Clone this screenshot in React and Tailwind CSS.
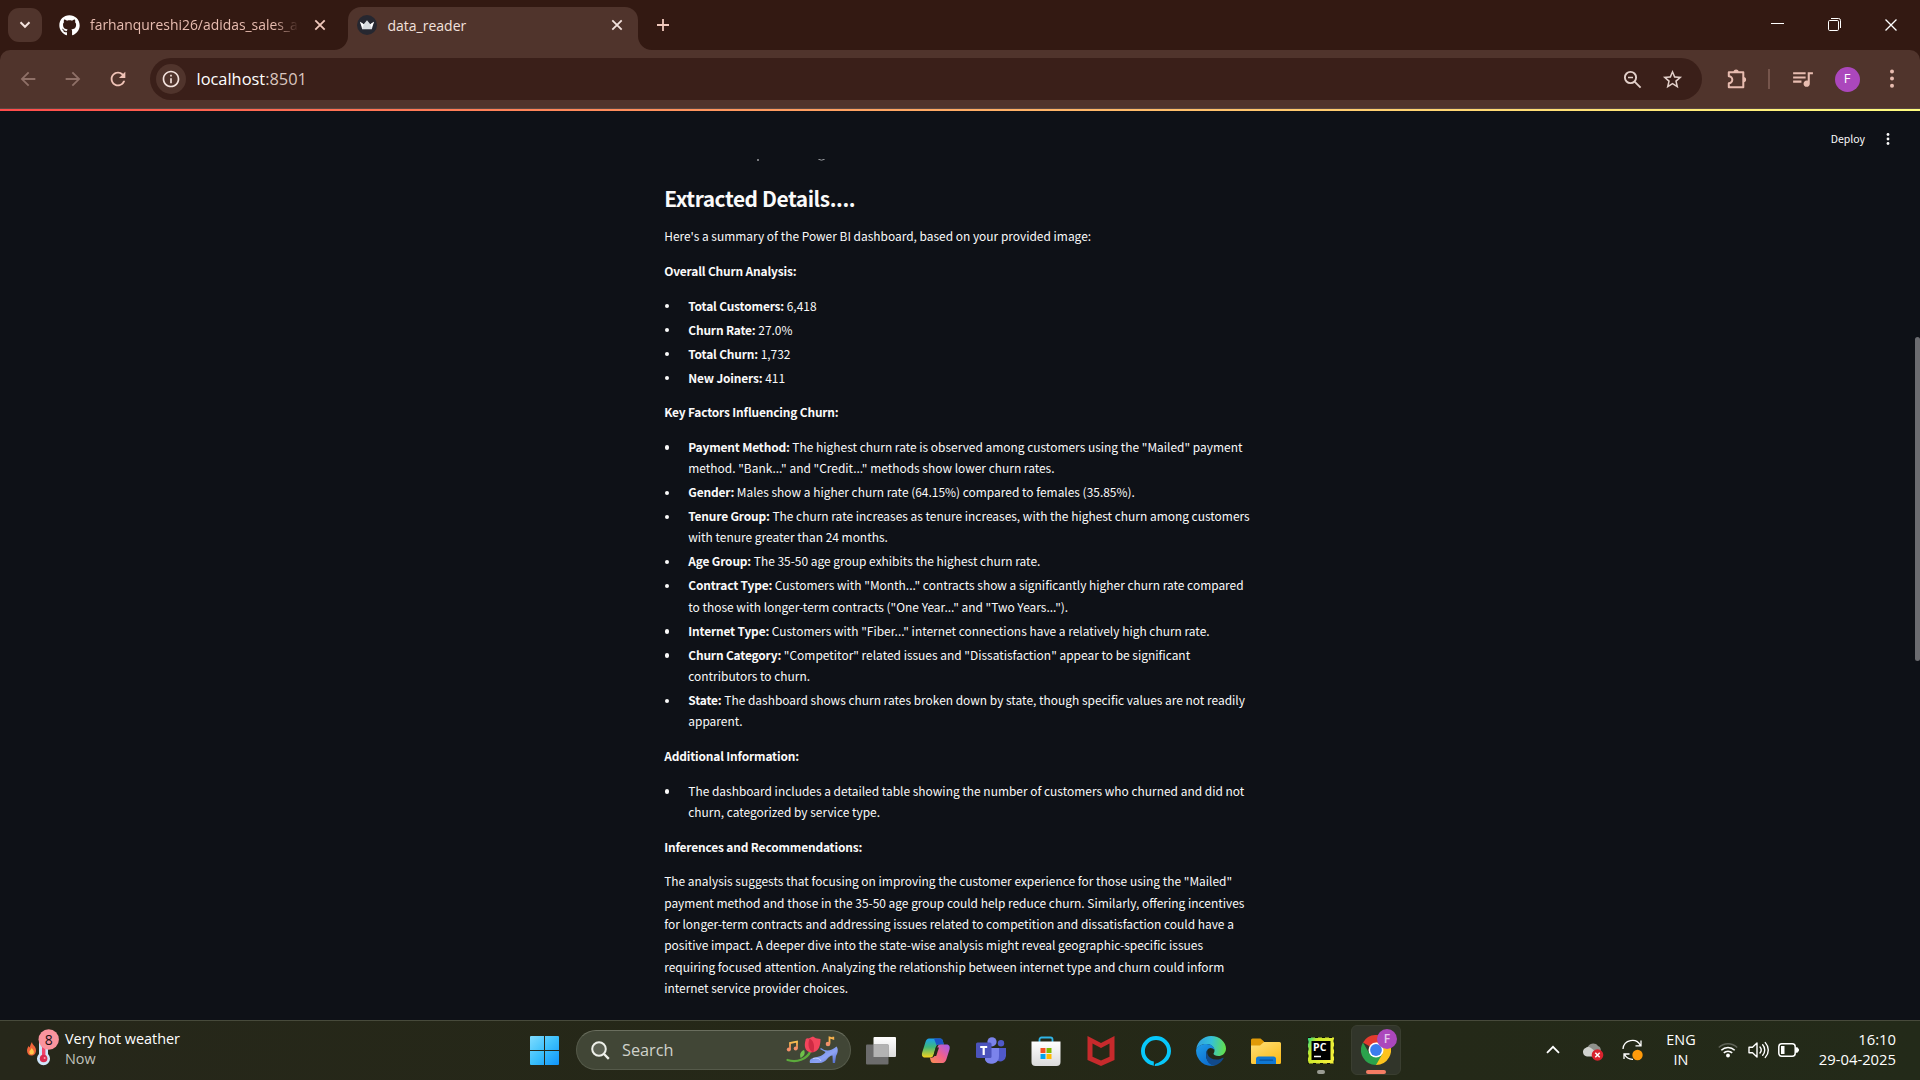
import React from "react";
import { FaGithub } from "react-icons/fa";
import { MdStarBorder, MdQueueMusic, MdOutlineInfo, MdArrowBack, MdArrowForward, MdRefresh } from "react-icons/md";

const Cross = ({ className = "", size = 12, w = 1.8 }) => (
  <svg width={size} height={size} viewBox="0 0 12 12" className={className} fill="none" stroke="currentColor" strokeWidth={w}>
    <path d="M1.3 1.3 10.7 10.7M10.7 1.3 1.3 10.7" />
  </svg>
);

function TabStrip() {
  return (
    <div className="flex h-[50px] shrink-0 items-start bg-[#331912] text-[#e8bcb0]">
      <div className="mt-2 ml-2 flex h-[34px] w-[34px] items-center justify-center rounded-[11px] bg-[#50342c] text-[#f5e3de]">
        <svg width="12" height="8" viewBox="0 0 12 8" fill="none" stroke="currentColor" strokeWidth="2"><path d="m1.5 1.3 4.5 4.5 4.5-4.5" /></svg>
      </div>
      <div className="mt-[7px] ml-[17px] flex h-9 w-[289px] items-center">
        <FaGithub className="shrink-0 text-white" size={21} />
        <span className="ml-[10px] w-[209px] overflow-hidden text-[13.9px] whitespace-nowrap [mask-image:linear-gradient(to_right,black_88%,transparent)]">
          farhanqureshi26/adidas_sales_a
        </span>
        <Cross className="ml-[15px] text-[#f0c8bc]" />
      </div>
      <div className="relative mt-[7px] flex h-[43px] w-[290px] items-start rounded-t-[13px] bg-[#50342c] text-[#f3e2dd]">
        <svg className="absolute bottom-0 -left-[14px]" width="14" height="14" viewBox="0 0 14 14"><path d="M14 0A14 14 0 0 1 0 14H14z" fill="#50342c" /></svg>
        <svg className="absolute -right-[14px] bottom-0" width="14" height="14" viewBox="0 0 14 14"><path d="M0 0A14 14 0 0 0 14 14H0z" fill="#50342c" /></svg>
        <div className="flex h-9 w-full items-center">
          <svg className="ml-[9px]" width="20" height="20" viewBox="0 0 20 20">
            <circle cx="10" cy="10" r="10" fill="#262730" />
            <path d="m3 6.7 3.7 2.6L10 5.3l3.3 4L17 6.7l-2.2 7.6H5.200z" fill="#d9dce0" />
            <path d="m3 6.700 3.700 2.600-1 3.700zM17 6.700l-3.700 2.600 1 3.700z" fill="#fff" />
          </svg>
          <span className="ml-[10.500px] text-[14px]">data_reader</span>
          <Cross className="mr-[15px] ml-auto" />
        </div>
      </div>
      <svg className="mt-[19px] ml-[18.500px]" width="12" height="12" viewBox="0 0 12 12" stroke="#f0c8bc" strokeWidth="1.8"><path d="M6 0v12M0 6h12" /></svg>
      <div className="mt-[17px] mr-[22px] ml-auto flex h-[15px] items-center gap-[43.500px] text-white">
        <svg width="13" height="13" viewBox="0 0 13 13" stroke="currentColor"><path d="M0 5.500h13" /></svg>
        <svg width="13" height="13" viewBox="0 0 13 13" fill="none" stroke="currentColor">
          <rect x=".5" y="2.500" width="10" height="10" rx="1.200" />
          <path d="M3 .500h7.500a2 2 0 0 1 2 2V10" />
        </svg>
        <Cross size={14} w={1.1} />
      </div>
    </div>
  );
}

function Toolbar() {
  return (
    <div className="shrink-0 bg-[#331912]">
      <div className="flex h-[58px] items-center rounded-t-[10px] bg-[#50342c] text-[#e8bcb0]">
        <MdArrowBack className="ml-[16.500px] text-[#8f7067]" size={22} />
        <MdArrowForward className="ml-[23px] text-[#8f7067]" size={22} />
        <MdRefresh className="ml-[23px] text-[#f0c3b7]" size={22} />
        <div className="ml-[21.500px] flex h-[42px] w-[1552px] items-center rounded-full bg-[#3a1f19] text-[#e3d0ca]">
          <div className="ml-[6px] flex h-[30px] w-[30px] items-center justify-center rounded-full bg-[#50342c]">
            <MdOutlineInfo size={20} className="text-[#f3e2dd]" />
          </div>
          <span className="ml-[10.500px] text-[16.400px] text-white">localhost<span className="text-[#d9c5bf]">:8501</span></span>
          <svg className="mr-[19px] ml-auto" width="19" height="19" viewBox="0 0 19 19" fill="none" stroke="currentColor" strokeWidth="1.900">
            <circle cx="7.500" cy="7.500" r="5.600" /><path d="m11.600 11.600 6 6" /><path d="M5 7.500h5" strokeWidth="1.500" />
          </svg>
          <MdStarBorder size={23} className="mr-[18px]" />
        </div>
        <svg className="ml-[23.500px]" width="22" height="22" viewBox="0 0 22 22" fill="none" stroke="currentColor" strokeWidth="2" strokeLinejoin="round">
          <path d="M2.800 4.200H17.300V19.200H2.800V15.200A3.500 3.500 0 0 0 2.800 8.200z" />
          <path d="M7.500 4a2.600 2.600 0 0 1 5.200 0zM17.500 9a2.600 2.600 0 0 1 0 5.200z" fill="currentColor" stroke="none" />
        </svg>
        <div className="ml-[20px] h-[20px] w-[2px] bg-[#76554c]" />
        <MdQueueMusic className="-mt-[2px] ml-[20px]" size={25} />
        <div className="ml-[20px] flex h-[25px] w-[25px] items-center justify-center rounded-full bg-[#ab47bc] text-[13px] text-white">F</div>
        <svg className="ml-[29.500px]" width="6" height="20" viewBox="0 0 6 20" fill="currentColor"><circle cx="3" cy="2.500" r="2" /><circle cx="3" cy="9.500" r="2" /><circle cx="3" cy="16.800" r="2" /></svg>
      </div>
      <div className="h-px bg-[#5a4742]" />
    </div>
  );
}

const B = ({ children }) => <b className="font-bold tracking-[-0.165px]">{children}</b>;

const Lines = ({ items }) => items.map((l, i) => <span key={i} className="block whitespace-nowrap">{l}</span>);

const List = ({ items }) => (
  <ul className="mb-[13.333px] flex flex-col gap-[2.667px]">
    {items.map((lines, i) => (
      <li key={i} className="flex">
        <span className="mt-[9.500px] mr-[19.200px] ml-[0.500px] h-[4.400px] w-[4.400px] shrink-0 rounded-full bg-[#fafafa]" />
        <span><Lines items={lines} /></span>
      </li>
    ))}
  </ul>
);

const P = ({ children }) => <p className="mb-[13.333px]">{children}</p>;

function Page() {
  return (
    <div className="flex h-[911px] shrink-0 flex-col overflow-hidden bg-[#0e1117] text-[#fafafa]">
      <div className="h-[2px] shrink-0 bg-gradient-to-r from-[#ff4b4b] to-[#fffd80]" />
      <div className="flex flex-1">
        <div className="flex w-[1914px] flex-col">
          <div className="flex h-12 shrink-0 items-center justify-end font-['Noto_Sans_CJK_SC',sans-serif] text-[10.500px]">
            <span className="mt-2">Deploy</span>
            <svg className="mt-2 mr-[24px] ml-[21px]" width="4" height="12" viewBox="0 0 4 12" fill="currentColor"><circle cx="2" cy="1.500" r="1.400" /><circle cx="2" cy="6" r="1.400" /><circle cx="2" cy="10.500" r="1.400" /></svg>
          </div>
          <main className="ml-[664.200px] w-[587px] font-['Noto_Sans_CJK_SC',sans-serif] text-[11.940px] leading-[21.333px]">
            <div className="flex h-[25.200px] items-start text-[#9a9ca1]">
              <span className="ml-[93px] h-[2px] w-[2px] bg-[#77797e]" />
              <svg className="ml-[59px]" width="7" height="2" viewBox="0 0 7 2" fill="none" stroke="currentColor"><path d="M.3.200Q3.500 2.200 6.700.200" /></svg>
            </div>
            <h3 className="mb-[13.050px] text-[20.900px] leading-[28px] font-bold tracking-[-0.430px] whitespace-nowrap">Extracted Details....</h3>
            <P>Here's a summary of the Power BI dashboard, based on your provided image:</P>
            <P><B>Overall Churn Analysis:</B></P>
            <List items={[
              [<><B>Total Customers:</B> 6,418</>],
              [<><B>Churn Rate:</B> 27.0%</>],
              [<><B>Total Churn:</B> 1,732</>],
              [<><B>New Joiners:</B> 411</>],
            ]} />
            <P><B>Key Factors Influencing Churn:</B></P>
            <List items={[
              [<><B>Payment Method:</B> The highest churn rate is observed among customers using the "Mailed" payment</>, 'method. "Bank..." and "Credit..." methods show lower churn rates.'],
              [<><B>Gender:</B> Males show a higher churn rate (64.15%) compared to females (35.85%).</>],
              [<><B>Tenure Group:</B> The churn rate increases as tenure increases, with the highest churn among customers</>, "with tenure greater than 24 months."],
              [<><B>Age Group:</B> The 35-50 age group exhibits the highest churn rate.</>],
              [<><B>Contract Type:</B> Customers with "Month..." contracts show a significantly higher churn rate compared</>, 'to those with longer-term contracts ("One Year..." and "Two Years...").'],
              [<><B>Internet Type:</B> Customers with "Fiber..." internet connections have a relatively high churn rate.</>],
              [<><B>Churn Category:</B> "Competitor" related issues and "Dissatisfaction" appear to be significant</>, "contributors to churn."],
              [<><B>State:</B> The dashboard shows churn rates broken down by state, though specific values are not readily</>, "apparent."],
            ]} />
            <P><B>Additional Information:</B></P>
            <List items={[["The dashboard includes a detailed table showing the number of customers who churned and did not", "churn, categorized by service type."]]} />
            <P><B>Inferences and Recommendations:</B></P>
            <P>
              <Lines items={[
                'The analysis suggests that focusing on improving the customer experience for those using the "Mailed"',
                "payment method and those in the 35-50 age group could help reduce churn. Similarly, offering incentives",
                "for longer-term contracts and addressing issues related to competition and dissatisfaction could have a",
                "positive impact. A deeper dive into the state-wise analysis might reveal geographic-specific issues",
                "requiring focused attention. Analyzing the relationship between internet type and churn could inform",
                "internet service provider choices.",
              ]} />
            </P>
          </main>
        </div>
        <div className="w-[6px] pt-[226px]">
          <div className="ml-px h-[324px] rounded-[3px] bg-[#6b6c70]" />
        </div>
      </div>
    </div>
  );
}

const Icon = ({ children }) => (
  <div className="flex w-[55px] shrink-0 justify-center">
    <svg width="30" height="30" viewBox="0 0 30 30">{children}</svg>
  </div>
);

function SearchDoodle() {
  return (
    <svg width="53" height="28" viewBox="0 0 53 28" fill="none">
      <defs>
        <linearGradient id="note" x1="0" y1="0" x2="0" y2="1"><stop stopColor="#f8c24e" /><stop offset="1" stopColor="#f07a5c" /></linearGradient>
        <linearGradient id="shoe" x1="0" y1="0" x2="1" y2="1"><stop stopColor="#5b86e0" /><stop offset=".6" stopColor="#8ea3f5" /><stop offset="1" stopColor="#4b66c8" /></linearGradient>
      </defs>
      <path d="M4 13.500V7l7-1.500v7" stroke="url(#note)" strokeWidth="1.800" />
      <circle cx="2.800" cy="13.500" r="2" fill="#f3906a" /><circle cx="9.700" cy="12.500" r="2" fill="#f3906a" />
      <path d="M43.500 7.500V1.500l3.800 1.200V.800" stroke="#f8b24e" strokeWidth="1.800" /><circle cx="42" cy="8" r="2.300" fill="#f3906a" />
      <path d="M1.500 24c9 3 19.500-.5 23-9" stroke="#5cab3c" strokeWidth="2.200" strokeLinecap="round" />
      <path d="M14.500 22c-1-4 0-6.500 3.500-8 1.500 3 .5 6-3.500 8z" fill="#6fc24a" />
      <path d="M19.500 4.500c0-1.800 1.500-2.500 3-2L27 .5l2.800 1.700L34.500 3c0 5.500-1 13-9 13.500C18.500 16 18 9 19.500 4.500z" fill="#f2455c" />
      <path d="M23.500 2.500c4 2 5.500 6.500 4 13.700-4-.700-6.500-6.500-4-13.700z" fill="#cf2b44" />
      <path d="M35 12c5 4 10 3 15.500-1.500C52.500 13 52 17 50 20l-1 7h-2.200l-.3-7.500C41.500 19.500 41 27 33 27H24c-1-3 1-5 5-5.500 6-1 9-3 10.500-5.500L34 13z" fill="url(#shoe)" />
      <path d="M27 22.500c4-1 7 0 8 2.500" stroke="#c4d0ff" strokeWidth="1" />
    </svg>
  );
}

function Taskbar() {
  return (
    <div className="flex h-[60px] shrink-0 items-center border-t border-[#474a3b] bg-gradient-to-r from-[#26271a] via-[#252817] to-[#232a19] text-white">
      <div className="-mt-[3px] flex w-[530px] items-center pl-[26px]">
        <svg className="-mt-[2px]" width="34" height="38" viewBox="0 0 34 38">
          <path d="M6 13c0 3 4 4 4 8.500 0 3-2 5-4.600 5S1 24.500 1 21.500c0-2 1-3 1.500-4.500l1.200 1.500C4.500 16.500 4.500 15 6 13z" fill="#f0643a" />
          <path d="M5.700 19c1 1.500 2.200 2.500 2.200 4.200a2.300 2.300 0 0 1-4.600 0c0-1.600 1.600-2.400 2.400-4.200z" fill="#ffc94a" />
          <path d="M13 10h9v15a6.500 6.500 0 1 1-9 0z" fill="#cfe6fb" />
          <path d="M16 8h3.400v20h-3.400z" fill="#f0436a" /><circle cx="17.600" cy="29.500" r="3.800" fill="#d92b50" /><circle cx="18.600" cy="29" r="1" fill="#ff9ab0" />
          <circle cx="22.700" cy="10.500" r="10.200" fill="#fb949e" />
          <text x="22.700" y="15.600" fontSize="14" textAnchor="middle" fill="#201015" fontFamily="Open Sans">8</text>
        </svg>
        <div className="ml-[5px] text-[14.400px] leading-5">
          <div>Very hot weather</div>
          <div className="text-[#c0c1bb]">Now</div>
        </div>
      </div>
      <svg width="29" height="29" viewBox="0 0 29 29">
        <defs><linearGradient id="win" x1="0" y1="0" x2="1" y2="1" ><stop stopColor="#7fdcff" /><stop offset=".5" stopColor="#3cc0fb" /><stop offset="1" stopColor="#0f94fb" /></linearGradient></defs>
        <path fill="url(#win)" d="M1 0h13v14H0V1a1 1 0 0 1 1-1zM15 0h13a1 1 0 0 1 1 1v13H15zM0 15h14v14H1a1 1 0 0 1-1-1zM15 15h14v13a1 1 0 0 1-1 1H15z" />
      </svg>
      <div className="-mt-[1px] ml-[17px] flex h-10 w-[275px] items-center rounded-full border border-[#555a4a] border-t-[#6a6e5e] bg-[#414636]">
        <svg className="ml-[14px]" width="19" height="19" viewBox="0 0 19 19" fill="#5c6153" stroke="#eef0ea" strokeWidth="2"><circle cx="8" cy="8" r="6.800" /><path d="m13 13 4.800 4.800" strokeWidth="2.400" /></svg>
        <span className="mt-px ml-[12px] text-[16.300px] text-[#d0d2cb]">Search</span>
        <div className="mr-[11px] ml-auto"><SearchDoodle /></div>
      </div>
      <div className="ml-[2px] flex items-center">
        <Icon>
          <defs><linearGradient id="tv" x1="0" y1="0" x2="0" y2="1"><stop stopColor="#fff" /><stop offset="1" stopColor="#dcdcdc" /></linearGradient></defs>
          <rect x="7.500" y="1" width="22.500" height="20" rx="1" fill="url(#tv)" />
          <rect x="0" y="8.500" width="22.500" height="20" rx="1" fill="#6c6c6c" />
          <path d="M7.500 8.500h15V21h-15z" fill="#b3b3b3" />
        </Icon>
        <Icon>
          <defs>
            <linearGradient id="cp1" x1="0" y1="0" x2="0" y2="1"><stop stopColor="#1ba0f0" /><stop offset=".45" stopColor="#3fb87a" /><stop offset="1" stopColor="#f6d21c" /></linearGradient>
            <linearGradient id="cp2" x1="1" y1="0" x2="0" y2="1"><stop stopColor="#a05cf5" /><stop offset=".5" stopColor="#f0608c" /><stop offset="1" stopColor="#fb9050" /></linearGradient>
          </defs>
          <path d="M8 2.500h11c2 0 2.500 1 3 3l.8 3h-4.600c-2 0-3 1-3.500 3l-2 7c-.6 2-1.500 3-3.500 3H4c-3 0-3.500-2.500-2.800-5L4.500 6C5.100 3.800 6.400 2.500 8 2.500z" fill="url(#cp1)" />
          <path d="M13 2.500h6c2 0 2.500 1 3 3l.8 3h-4.600c-1 0-2 .2-2.600 1z" fill="#1c55c8" />
          <path d="M20 8.500h5.500c3 0 3.700 2.500 3 5L25.500 23c-.6 2.200-1.900 4-4 4H12.500c-2 0-2.500-1-3-3l-.6-2.500c3 .5 4.400-.5 5-2.500L16.500 11c.5-1.700 1.500-2.500 3.500-2.500z" fill="url(#cp2)" />
          <path d="M14.800 11.500h3.200L15.200 20H12.300z" fill="#252917" />
        </Icon>
        <Icon>
          <circle cx="16" cy="5.800" r="4.600" fill="#7b83eb" /><circle cx="25" cy="7.200" r="3.200" fill="#5059c9" />
          <path d="M20 12h10v8a6 6 0 0 1-8 5z" fill="#5059c9" />
          <path d="M9 12h14v8a7.500 7.500 0 0 1-14 4z" fill="#7b83eb" />
          <rect x="0" y="6.500" width="15.500" height="15.500" rx="1.500" fill="#4b53bc" />
          <path d="M4.200 10h7v2.100H8.800v7H6.600v-7H4.200z" fill="#fff" />
        </Icon>
        <Icon>
          <defs><linearGradient id="st" x1="0" y1="0" x2="0" y2="1"><stop stopColor="#fff" /><stop offset="1" stopColor="#dadada" /></linearGradient></defs>
          <path d="M8.500 7V3.500a2 2 0 0 1 2-2h9a2 2 0 0 1 2 2V7" fill="none" stroke="#2fb4e6" strokeWidth="1.800" />
          <path d="M.5 5.500h29V26a4 4 0 0 1-4 4h-21a4 4 0 0 1-4-4z" fill="url(#st)" />
          <path d="M9.500 12h5v5h-5z" fill="#f25022" /><path d="M15.500 12h5v5h-5z" fill="#7fba00" /><path d="M9.500 18h5v5h-5z" fill="#00a4ef" /><path d="M15.500 18h5v5h-5z" fill="#ffb900" />
        </Icon>
        <Icon>
          <path d="M1.500 0 15 7l13.500-7v24L15 30 1.500 24z" fill="#c62a2c" />
          <path d="M6.500 7.500 15 12l8.500-4.500v13.200L15 24.500l-8.500-3.800z" fill="#252917" />
        </Icon>
        <Icon>
          <path fillRule="evenodd" d="M15 0a15 15 0 1 0 0 30l-.2 0c-.7 0-1.500 0-2-.3V25.500C7.500 24.500 3.900 20.200 3.900 15a11.100 11.100 0 1 1 22.200 0c0 6-5 10.500-11 12.500-1 .3-1.500 1.200-1.200 2.500C23 30 30 23.300 30 15A15 15 0 0 0 15 0z" fill="#07c8fb" />
        </Icon>
        <Icon>
          <defs>
            <linearGradient id="ed1" x1="0" y1=".3" x2="1" y2=".4"><stop stopColor="#2f9ee0" /><stop offset=".5" stopColor="#35c1d8" /><stop offset="1" stopColor="#62e04c" /></linearGradient>
            <linearGradient id="ed2" x1="0" y1="0" x2=".6" y2="1"><stop stopColor="#1f9de8" /><stop offset="1" stopColor="#0d6fd0" /></linearGradient>
          </defs>
          <path d="M15 0c9 0 15 6.500 15 12.500 0 5-4 7.500-7.500 7.500-3 0-5-1-5-2.200 0-.8 1-1.200 1-3.300 0-3-3-6.500-8-6.500C5 8 1.500 11 .3 13 1.300 5.500 7.500 0 15 0z" fill="url(#ed1)" />
          <path d="M.1 14C1 10.500 5 8 10.500 8c5 0 8 3 8 6-1-1.300-2.500-2-4-2-2.500 0-4.500 3-4.500 7 0 6 4.500 10 9 10.200A15 15 0 0 1 .1 14z" fill="url(#ed2)" />
          <path d="M12 13c-2 3-.5 10.500 8.500 10.500 3 0 5-1 6.500-1.800.5-.2.800.2.600.600A15 15 0 0 1 19 29.400C13.500 30 10 24.500 10 19c0-2.500.8-4.700 2-6z" fill="#114a8b" />
        </Icon>
        <Icon>
          <defs><linearGradient id="fo" x1="0" y1="0" x2=".7" y2="1"><stop stopColor="#ffe07a" /><stop offset="1" stopColor="#fbbd1e" /></linearGradient></defs>
          <path d="M0 4a1.500 1.500 0 0 1 1.500-1.500h8l3.500 3v5H0z" fill="#e09a08" />
          <path d="M0 9.500h9L13 6h15.500A1.500 1.500 0 0 1 30 7.500V26.500a1.500 1.500 0 0 1-1.500 1.500h-27A1.500 1.500 0 0 1 0 26.500z" fill="url(#fo)" />
          <path d="M5 28v-5a2.500 2.500 0 0 1 2.500-2.500h15A2.500 2.500 0 0 1 25 23v5z" fill="#0f78d4" /><path d="M9 24.200h12.500" stroke="#08509c" strokeWidth="1.300" strokeLinecap="round" />
        </Icon>
        <div className="relative flex w-[55px] justify-center">
          <svg width="30" height="30" viewBox="0 0 30 30">
            <defs><linearGradient id="pc" x1="0" y1="0" x2="1" y2=".5"><stop stopColor="#21d789" /><stop offset=".3" stopColor="#c8e82a" /><stop offset="1" stopColor="#f2f03a" /></linearGradient></defs>
            <path d="M2 1.500h26v26H2z" fill="url(#pc)" /><path d="M2 1.500h26v26H2z" fill="none" stroke="#10140a" strokeDasharray="3 4" />
            <path d="M5.500 5h19v19h-19z" fill="#000" />
            <text x="7" y="15" fontSize="10.500" fontWeight="bold" fontFamily="Open Sans" fill="#fff" textLength="13.500">PC</text>
            <path d="M8 20.500h7" stroke="#fff" strokeWidth="1.500" />
          </svg>
          <span className="absolute top-[34px] left-[24px] h-1 w-2 rounded-full bg-[#9a9c93]" />
        </div>
        <div className="relative -mt-[1px] mr-[1px] ml-[3px] flex h-[50px] w-[50px] items-center justify-center rounded-md border border-[#3a3e30] bg-[#31352a]">
          <svg width="30" height="30" viewBox="0 0 30 30">
            <path d="M15 15 2 7.500A15 15 0 0 1 28 7.500z" fill="#e33b2e" />
            <path d="M15 15V7.500h13A15 15 0 0 1 15 30z" fill="#fcc31e" />
            <path d="M15 15 21.500 18.700 15 30A15 15 0 0 1 2 7.500l6.500 11.200z" fill="#2ba24c" />
            <circle cx="15" cy="15" r="7.500" fill="#fff" /><circle cx="15" cy="15" r="5.900" fill="#3b7ded" />
          </svg>
          <span className="absolute top-[3px] right-[3px] flex h-5 w-5 items-center justify-center rounded-full bg-[#ab47bc] text-[12px] font-semibold text-[#e6c8ec]">F</span>
          <span className="absolute bottom-0 left-[14px] h-1 w-5 rounded-full bg-[#f47c64]" />
        </div>
      </div>
      <div className="-mt-[2px] ml-auto flex items-center pr-[24px]">
        <svg width="14" height="9" viewBox="0 0 14 9" fill="none" stroke="currentColor" strokeWidth="1.800"><path d="m1 7.800 6-6 6 6" /></svg>
        <svg className="mt-1 ml-[22px]" width="22" height="20" viewBox="0 0 22 20">
          <path d="M6 13.500a5 5 0 0 1 0-9C8 1 13.500.500 16 4c3 1 3.500 4 2 8z" fill="#8f918c" />
          <path d="M5 14.500A4.500 4.500 0 0 1 3.500 6c2-1.500 4-1 5.500 0l5 4-3 4.500z" fill="#d0d2cf" />
          <circle cx="15.500" cy="13" r="5.800" fill="#d9232e" /><path d="m13.300 10.800 4.400 4.400m0-4.400-4.400 4.400" stroke="#fff" strokeWidth="1.500" />
        </svg>
        <svg className="ml-[18px]" width="22" height="22" viewBox="0 0 22 22" fill="none" stroke="currentColor" strokeWidth="1.300">
          <path d="M1 10A9.300 9.300 0 0 1 18.500 6.500M19 1.500v5.300h-5.500M11 20.300a9 9 0 0 1-8.500-5M2 20v-5h5.500" />
          <circle cx="15.500" cy="16" r="5.200" fill="#ff9a0a" stroke="none" />
        </svg>
        <div className="ml-[20px] w-[34px] text-center text-[14.400px] leading-5"><div>ENG</div><div>IN</div></div>
        <svg className="ml-[20px]" width="20" height="16" viewBox="0 0 20 16" fill="none" stroke="currentColor" strokeWidth="1.500">
          <path d="M.8 5.500a13 13 0 0 1 18.400 0" stroke="#5f6358" /><path d="M3.300 8.300a9.400 9.400 0 0 1 13.400 0M5.800 10.900a6 6 0 0 1 8.400 0" /><circle cx="10" cy="13.500" r="1.900" fill="currentColor" stroke="none" />
        </svg>
        <svg className="ml-[10px]" width="21" height="18" viewBox="0 0 21 18" fill="none" stroke="currentColor" strokeWidth="1.400" strokeLinejoin="round" strokeLinecap="round">
          <path d="M1 6.200v5.600h3.500L9 16V2L4.500 6.200z" /><path d="M12 6c1.500 1.800 1.500 4.200 0 6M14.700 3.800c2.700 3 2.700 7.400 0 10.400M17.300 1.600c4 4.400 4 10.400 0 14.800" />
        </svg>
        <svg className="ml-[9px]" width="21" height="14" viewBox="0 0 21 14" fill="none" stroke="currentColor" strokeWidth="1.500">
          <rect x=".8" y=".8" width="16.400" height="12.400" rx="3" /><path d="M3 3h3.500v8H3z" fill="currentColor" stroke="none" /><path d="M18 5h1l1.200 1.500v1L19 9h-1z" fill="currentColor" />
        </svg>
        <div className="-mt-[2px] ml-[17px] w-[80px] text-right text-[14.800px] leading-5"><div>16:10</div><div>29-04-2025</div></div>
      </div>
    </div>
  );
}

export default function App() {
  return (
    <div className="flex h-[1080px] w-[1920px] flex-col overflow-hidden font-['Open_Sans',sans-serif]">
      <TabStrip />
      <Toolbar />
      <Page />
      <Taskbar />
    </div>
  );
}
